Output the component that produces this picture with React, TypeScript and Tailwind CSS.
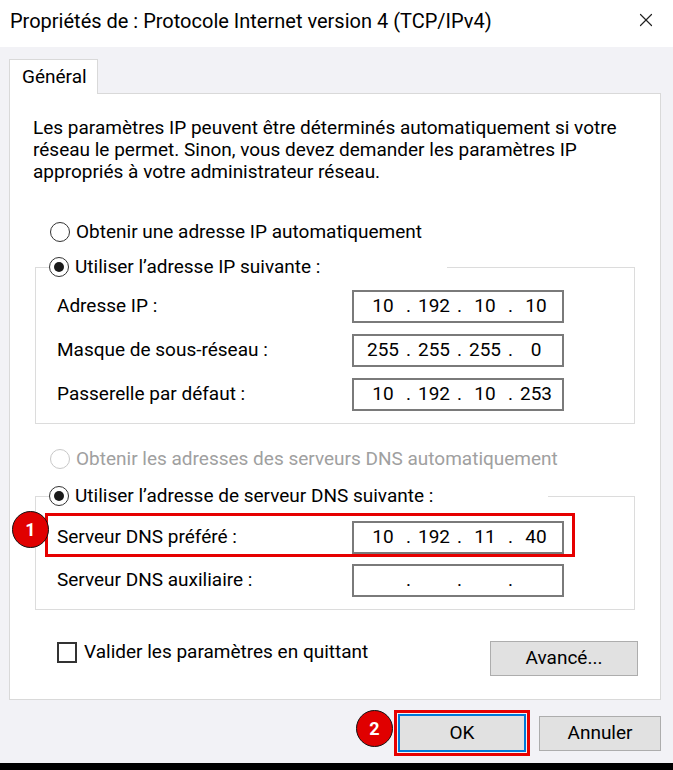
import { X } from 'lucide-react';

function Radio({ checked, disabled }: { checked?: boolean; disabled?: boolean }) {
  return (
    <span
      className={`flex h-[20px] w-[20px] shrink-0 items-center justify-center rounded-full border-[1.5px] bg-white ${
        disabled ? 'border-[#c8c8c8]' : 'border-[#333333]'
      }`}
    >
      {checked && <span className="h-[10px] w-[10px] rounded-full bg-[#1a1a1a]" />}
    </span>
  );
}

function IpField({ parts }: { parts: string[] }) {
  return (
    <div className="flex h-[33px] w-[212px] items-center border-2 border-[#7a7a7a] bg-white pl-[7px]">
      {parts.map((p, i) => (
        <div key={i} className="flex items-center">
          <span className="w-[44px] text-center">{p}</span>
          {i < 3 && <span className="w-[7px] text-center">.</span>}
        </div>
      ))}
    </div>
  );
}

function Row({ label, parts }: { label: string; parts: string[] }) {
  return (
    <div className="flex items-center justify-between">
      <span>{label}</span>
      <IpField parts={parts} />
    </div>
  );
}

function Badge({ n }: { n: number }) {
  return (
    <span className="flex h-[37px] w-[37px] items-center justify-center rounded-full border border-[#111] bg-[#e00000] text-[18px] font-bold text-white">
      {n}
    </span>
  );
}

export default function App() {
  return (
    <div
      className="relative h-[770px] w-[673px] overflow-hidden bg-[#f2f2f6] text-[19px] text-black"
      style={{ fontFamily: 'Roboto, "Noto Sans", sans-serif' }}
    >
      {/* title bar */}
      <div className="flex h-[47px] items-start justify-between bg-white pl-[10px] pr-[16px] pt-[8px]">
        <span className="text-[20px] leading-[26px]">Propriétés de : Protocole Internet version 4 (TCP/IPv4)</span>
        <X size={22} strokeWidth={1.3} className="mt-[1px] text-[#222]" />
      </div>

      {/* tab */}
      <div className="px-[9px] pt-[12px]">
        <div className="relative z-10 -mb-px flex h-[35px] w-[89px] items-center border border-b-0 border-[#d9d9d9] bg-white pl-[12px]">
          Général
        </div>

        {/* panel */}
        <div className="h-[607px] w-[652px] border border-[#d9d9d9] bg-white pt-[23px]">
          <p className="pl-[23px] leading-[22px]">
            Les paramètres IP peuvent être déterminés automatiquement si votre
            <br />
            réseau le permet. Sinon, vous devez demander les paramètres IP
            <br />
            appropriés à votre administrateur réseau.
          </p>

          <div className="mt-[38px] flex items-center gap-[6px] pl-[40px] leading-[22px]">
            <Radio />
            <span>Obtenir une adresse IP automatiquement</span>
          </div>

          <fieldset className="mx-[25px] mt-[13px] border border-[#dcdcdc] px-[13px] pb-[12px]">
            <legend className="flex w-[398px] items-center gap-[6px] leading-[22px]">
              <Radio checked />
              <span>Utiliser l’adresse IP suivante :</span>
            </legend>
            <div className="ml-[8px] mr-[57px] mt-[12px] flex flex-col gap-[11px]">
              <Row label="Adresse IP :" parts={['10', '192', '10', '10']} />
              <Row label="Masque de sous-réseau :" parts={['255', '255', '255', '0']} />
              <Row label="Passerelle par défaut :" parts={['10', '192', '10', '253']} />
            </div>
          </fieldset>

          <div className="mt-[24px] flex items-center gap-[6px] pl-[40px] leading-[22px] text-[#a0a0a0]">
            <Radio disabled />
            <span>Obtenir les adresses des serveurs DNS automatiquement</span>
          </div>

          <fieldset className="mx-[25px] mt-[15px] border border-[#dcdcdc] px-[13px] pb-[12px]">
            <legend className="flex w-[499px] items-center gap-[6px] leading-[22px]">
              <Radio checked />
              <span>Utiliser l’adresse de serveur DNS suivante :</span>
            </legend>
            <div className="relative ml-[8px] mr-[57px] mt-[14px] flex flex-col gap-[10px]">
              <div className="pointer-events-none absolute -left-[12px] -right-[11px] -top-[8px] h-[44px] border-[3px] border-[#e60000]" />
              <div className="pointer-events-none absolute -left-[45px] -top-[10px]">
                <Badge n={1} />
              </div>
              <Row label="Serveur DNS préféré :" parts={['10', '192', '11', '40']} />
              <Row label="Serveur DNS auxiliaire :" parts={['', '', '', '']} />
            </div>
          </fieldset>

          <div className="mt-[31px] flex items-start justify-between pl-[47px] pr-[22px]">
            <div className="flex items-center gap-[7px] leading-[22px]">
              <span className="h-[21px] w-[20px] border-2 border-[#333]" />
              <span>Valider les paramètres en quittant</span>
            </div>
            <button className="h-[35px] w-[148px] border border-[#adadad] bg-[#e1e1e1]">Avancé...</button>
          </div>
        </div>
      </div>

      {/* footer buttons */}
      <div className="flex items-start justify-end gap-[9px] pr-[12px] pt-[10px]">
        <div className="relative">
          <div className="absolute -left-[38px] top-[0px]">
            <Badge n={2} />
          </div>
          <div className="border-[3px] border-[#e60000] p-px">
            <button className="h-[38px] w-[128px] border-2 border-[#0078d7] bg-[#e1e1e1]">OK</button>
          </div>
        </div>
        <button className="mt-[6px] h-[35px] w-[122px] border border-[#adadad] bg-[#e1e1e1]">Annuler</button>
      </div>

      <div className="absolute bottom-0 left-0 h-[7px] w-full bg-black" />
    </div>
  );
}
